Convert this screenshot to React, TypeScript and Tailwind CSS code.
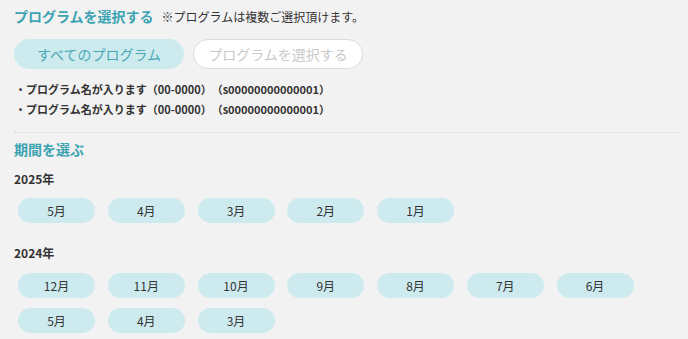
import React from "react";

const font = { fontFamily: '"Noto Sans CJK JP", "Noto Sans", sans-serif' };

function Pill({ label }: { label: string }) {
  return (
    <div className="w-[77px] h-[25px] rounded-full bg-[#cdebef] flex items-center justify-center text-[12px] leading-none text-[#333]">
      {label}
    </div>
  );
}

export default function App() {
  const y2025 = ["5月", "4月", "3月", "2月", "1月"];
  const y2024 = ["12月", "11月", "10月", "9月", "8月", "7月", "6月", "5月", "4月", "3月"];
  return (
    <div style={font} className="w-[688px] h-[339px] overflow-hidden bg-[#f2f2f2] px-[14px] pt-[6px] [text-spacing-trim:space-all]">
      <div className="flex items-baseline gap-[8px] leading-[20px]">
        <h2 className="text-[14px] font-bold text-[#3ba3b1]">プログラムを選択する</h2>
        <span className="text-[12px] text-[#333]">※プログラムは複数ご選択頂けます。</span>
      </div>
      <div className="flex gap-[9px] mt-[12px]">
        <button className="w-[170px] h-[30px] rounded-full bg-[#cdebef] text-[14px] text-[#4aa8b5] leading-none flex items-center justify-center">
          すべてのプログラム
        </button>
        <button className="w-[170px] h-[30px] rounded-full bg-white border border-[#dcdcdc] text-[14px] text-[#c9c9c9] leading-none flex items-center justify-center">
          プログラムを選択する
        </button>
      </div>
      <ul className="mt-[10px] text-[11px] font-bold text-[#333] leading-[20px] pl-[1px]">
        <li>・プログラム名が入ります（00-0000）（s00000000000001）</li>
        <li>・プログラム名が入ります（00-0000）（s00000000000001）</li>
      </ul>
      <div className="mt-[13px] border-t border-dotted border-[#d6d6d6] w-[666px]" />
      <h3 className="mt-[6px] text-[14px] font-bold text-[#3ba3b1] leading-[20px]">期間を選ぶ</h3>
      <div className="mt-[11px] text-[12px] font-bold text-[#333] leading-[18px]">2025年</div>
      <div className="mt-[10px] ml-[4px] flex flex-wrap gap-x-[12.75px] gap-y-[10px]">
        {y2025.map((m) => (
          <Pill key={"a" + m} label={m} />
        ))}
      </div>
      <div className="mt-[21px] text-[12px] font-bold text-[#333] leading-[18px]">2024年</div>
      <div className="mt-[11px] ml-[4px] flex flex-wrap gap-x-[12.75px] gap-y-[10px] w-[640px]">
        {y2024.map((m, i) => (
          <Pill key={"b" + i} label={m} />
        ))}
      </div>
    </div>
  );
}
